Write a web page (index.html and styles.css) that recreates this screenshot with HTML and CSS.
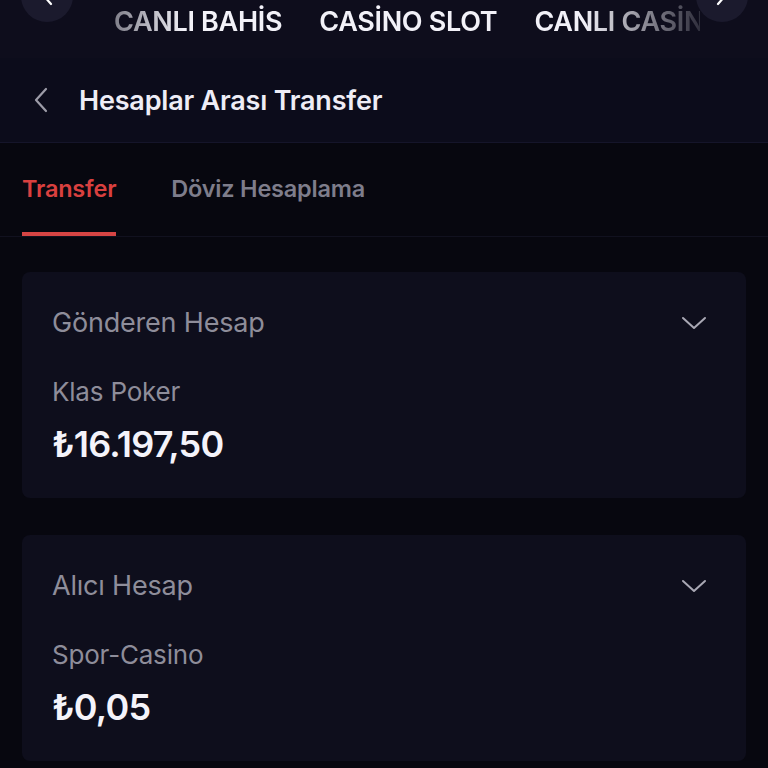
FILE: index.html
```html
<!DOCTYPE html>
<html lang="tr">
<head>
  <meta charset="UTF-8">
  <title>Hesaplar Arası Transfer</title>
  <link rel="stylesheet" href="styles.css">
</head>
<body>
  <nav class="top-nav">
    <button class="nav-arrow nav-arrow-left">
      <svg width="24" height="24" viewBox="0 0 24 24"><path d="M9 4 L16 12" stroke="#fff" stroke-width="2.2" stroke-linecap="round" fill="none"/></svg>
    </button>
    <div class="nav-links">
      <a class="nav-link">CANLI BAHİS</a>
      <a class="nav-link">CASİNO SLOT</a>
      <a class="nav-link">CANLI CASİNO</a>
    </div>
    <button class="nav-arrow nav-arrow-right">
      <svg width="24" height="24" viewBox="0 0 24 24"><path d="M15 4 L8 12" stroke="#fff" stroke-width="2.2" stroke-linecap="round" fill="none"/></svg>
    </button>
  </nav>

  <header class="page-header">
    <svg class="back-icon" width="16" height="26" viewBox="0 0 16 26"><path d="M13 2 L3 13 L13 24" stroke="#9d9ca8" stroke-width="2.2" stroke-linecap="round" stroke-linejoin="round" fill="none"/></svg>
    <h1>Hesaplar Arası Transfer</h1>
  </header>

  <div class="tabs">
    <div class="tab active">Transfer</div>
    <div class="tab">Döviz Hesaplama</div>
  </div>

  <main class="content">
    <!-- sender account -->
    <section class="account-card">
      <div class="card-head">
        <span class="card-label">Gönderen Hesap</span>
        <svg width="28" height="16" viewBox="0 0 28 16"><path d="M3 3 L14 13 L25 3" stroke="#a9a8b4" stroke-width="2" stroke-linecap="round" stroke-linejoin="round" fill="none"/></svg>
      </div>
      <div class="account-name">Klas Poker</div>
      <div class="account-balance">₺16.197,50</div>
    </section>

    <!-- receiver account -->
    <section class="account-card">
      <div class="card-head">
        <span class="card-label">Alıcı Hesap</span>
        <svg width="28" height="16" viewBox="0 0 28 16"><path d="M3 3 L14 13 L25 3" stroke="#a9a8b4" stroke-width="2" stroke-linecap="round" stroke-linejoin="round" fill="none"/></svg>
      </div>
      <div class="account-name">Spor-Casino</div>
      <div class="account-balance">₺0,05</div>
    </section>
  </main>
</body>
</html>
```

FILE: styles.css
```css
body {
  margin: 0;
  background-color: #07070f;
  font-family: 'Inter', 'Noto Sans', sans-serif;
  color: #ecebf5;
  overflow: hidden;
}

.top-nav {
  position: relative;
  height: 58px;
  background-color: #0e0d1c;
  overflow: hidden;
}

.nav-arrow {
  position: absolute;
  top: -30px;
  width: 52px;
  height: 52px;
  border-radius: 50%;
  border: none;
  background-color: #1b1a2d;
  display: flex;
  align-items: flex-end;
  justify-content: center;
  padding: 0 0 6px;
}
.nav-arrow-left { left: 21px; }
.nav-arrow-right { left: 696px; }

.nav-links {
  display: flex;
  gap: 37px;
  margin: 0 68px 0 114px;
  padding-top: 5px;
  white-space: nowrap;
  overflow: hidden;
  -webkit-mask-image: linear-gradient(to right, rgba(0,0,0,0.5) 0, #000 70px, #000 470px, rgba(0,0,0,0.15) 586px);
  mask-image: linear-gradient(to right, rgba(0,0,0,0.5) 0, #000 70px, #000 470px, rgba(0,0,0,0.15) 586px);
}

.nav-link {
  font-size: 27px;
  font-weight: 600;
  color: #f2f1f8;
  letter-spacing: -0.3px;
  line-height: 34px;
}

.page-header {
  height: 84px;
  display: flex;
  align-items: center;
  gap: 30px;
  padding-left: 33px;
  background-color: #0c0c1b;
  border-bottom: 1px solid #15152a;
}
.page-header h1 {
  margin: 0;
  font-size: 27px;
  font-weight: 600;
  color: #eeedf6;
  letter-spacing: -0.2px;
}

.tabs {
  display: flex;
  gap: 55px;
  padding: 0 22px;
  height: 93px;
  border-bottom: 1px solid #11111f;
}
.tab {
  padding-top: 31px;
  font-size: 23.5px;
  font-weight: 600;
  color: #7e7d8b;
  letter-spacing: -0.2px;
}
.tab.active {
  color: #d9403f;
  border-bottom: 4px solid #d64544;
  box-sizing: border-box;
}

.content {
  padding: 35px 22px 0;
  display: flex;
  flex-direction: column;
  gap: 37px;
}

.account-card {
  background-color: #0e0e1c;
  border-radius: 8px;
  padding: 34px 38px 0 30px;
  height: 226px;
  box-sizing: border-box;
}

.card-head {
  display: flex;
  justify-content: space-between;
  align-items: center;
}
.card-label {
  font-size: 27px;
  color: #8e8d9a;
  letter-spacing: -0.2px;
}

.account-name {
  margin-top: 37px;
  font-size: 26px;
  color: #8e8d9a;
  letter-spacing: -0.2px;
}

.account-balance {
  margin-top: 15px;
  font-size: 36px;
  font-weight: 600;
  color: #f4f3fa;
  letter-spacing: -0.8px;
}
```
